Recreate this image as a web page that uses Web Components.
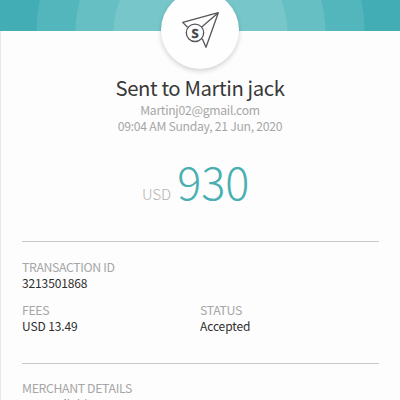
<!DOCTYPE html>
<html lang="en"><head><meta charset="utf-8"><title>Transfer receipt</title>
<style>html,body{margin:0;height:400px;overflow:hidden;background:#fdfdfd}body{font-family:"Noto Sans CJK SC","Noto Sans CJK JP",sans-serif;color:#333}</style></head><body>
<receipt-page></receipt-page>
<script>
const define=(name,html)=>customElements.define(name,class extends HTMLElement{
 constructor(){super();const t=document.createElement('template');t.innerHTML=html;this.attachShadow({mode:'open'}).append(t.content.cloneNode(true));}
});
define('wave-banner',`<style>:host{display:block;height:31px;background:radial-gradient(circle at 200.5px 33px,#77c7ca 86.5px,#65bfc3 87.5px 124.5px,#53b6bc 125.5px 163.5px,#42adb4 164.5px)}</style>`);
define('send-badge',`<style>:host{position:absolute;left:161px;top:-9px;width:78px;height:78px;border-radius:50%;background:#fefefe;box-shadow:0 2px 5px rgba(0,0,0,.18)}svg{display:block}text{font:bold 13px "Open Sans",sans-serif}</style>
<svg width="78" height="78" viewBox="161 -9 78 78" fill="none" stroke="#55555b" stroke-width="1.3" stroke-linejoin="round"><path d="M187.6 27.3 182.7 22.4 218.3 12.7 206 47.3 202.3 38.8M218.3 12.7 201.7 27"/><circle cx="195" cy="32.8" r="8.7"/><text x="195" y="37.5" text-anchor="middle" fill="#44444c" stroke="#44444c" stroke-width=".4">S</text></svg>`);
define('receipt-heading',`<style>:host{display:flex;flex-direction:column;align-items:center;padding-top:42px;color:#a6a6a6;font-size:12.2px;letter-spacing:-.28px;line-height:16px}h1{margin:0;font-size:20.3px;font-weight:400;letter-spacing:-.4px;line-height:29px;color:#383838}</style><h1><slot name="title"></slot></h1><slot></slot>`);
define('money-amount',`<style>:host{display:flex;align-items:baseline;height:60px;line-height:60px;margin:17px 0 0 142px;gap:6px;font-size:15px;font-weight:300;color:#b3b3b3}b{font-size:45px;font-weight:300;color:#4aafb2}</style><span><slot name="currency"></slot></span><b><slot></slot></b>`);
define('receipt-rule',`<style>:host{display:block;height:1px;background:#c8c8c8;margin:0 21px 0 22px}</style>`);
define('detail-field',`<style>:host{display:block;font-size:12px;letter-spacing:-.12px;line-height:16px;color:#2e2e2e}div{font-size:12.3px;letter-spacing:-.36px;color:#a6a6a6;line-height:17px;margin-bottom:-1px}</style><div><slot name="label"></slot></div><slot></slot>`);
define('field-grid',`<style>:host{display:grid;grid-template-columns:178px 1fr;row-gap:11px;padding-left:22px}::slotted([wide]){grid-column:1/-1}</style><slot></slot>`);
define('receipt-page',`<style>:host{display:block;position:relative;height:400px;overflow:hidden}.edge{position:absolute;left:0;top:31px;bottom:0;width:1px;background:#e8e8e8}.a{margin-top:30px}.f1{padding-top:17px}.b{margin-top:29px}.f2{padding-top:16px}.f2 detail-field{color:#888}</style>
<wave-banner></wave-banner><send-badge></send-badge><div class="edge"></div>
<receipt-heading><span slot="title">Sent to Martin jack</span><span>Martinj02@gmail.com</span><span>09:04 AM Sunday, 21 Jun, 2020</span></receipt-heading>
<money-amount><span slot="currency">USD</span>930</money-amount>
<receipt-rule class="a"></receipt-rule>
<field-grid class="f1"><detail-field wide><span slot="label">TRANSACTION ID</span>3213501868</detail-field><detail-field><span slot="label">FEES</span>USD 13.49</detail-field><detail-field><span slot="label">STATUS</span>Accepted</detail-field></field-grid>
<receipt-rule class="b"></receipt-rule>
<field-grid class="f2"><detail-field wide><span slot="label">MERCHANT DETAILS</span>Not available</detail-field></field-grid>`);
</script></body></html>
